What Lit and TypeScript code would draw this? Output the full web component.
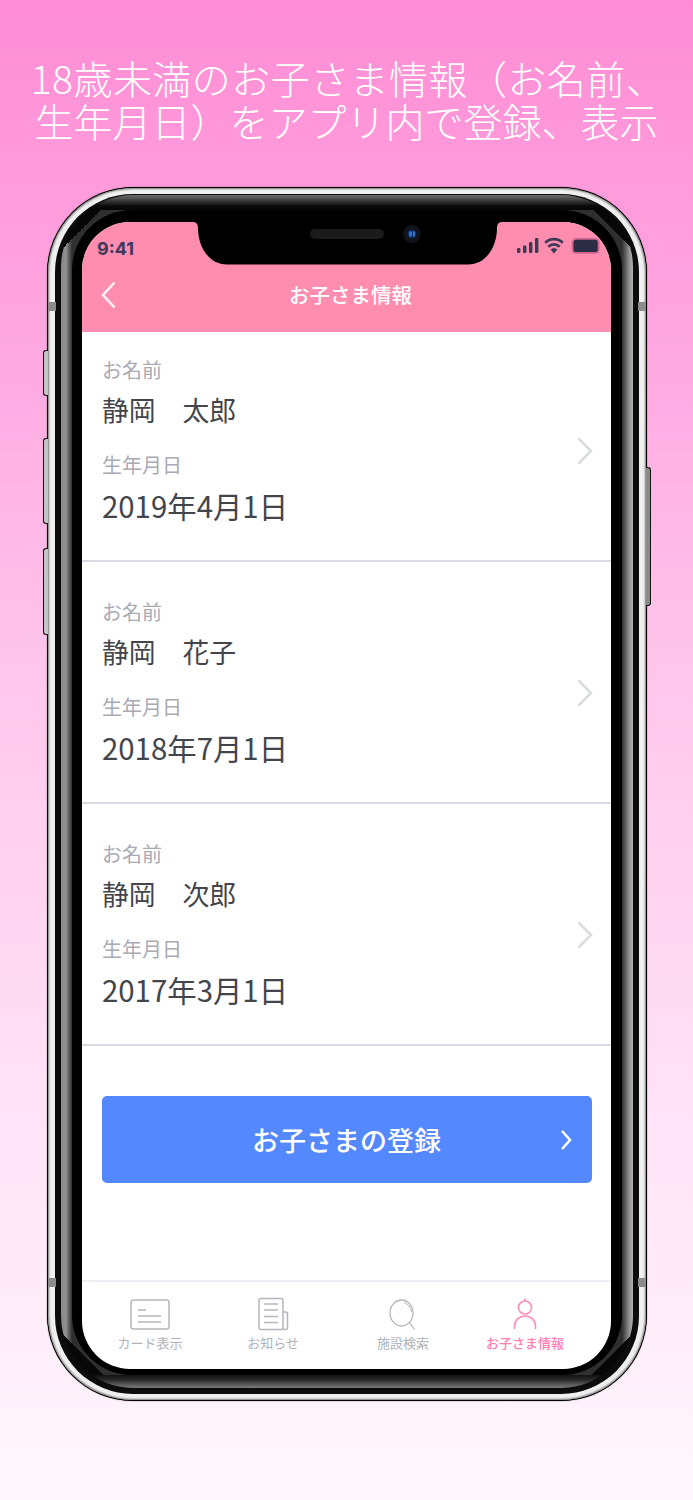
import { LitElement, html, css, svg } from "lit";
import { customElement } from "lit/decorators.js";

const CHILDREN = [
  { name: "静岡　太郎", birth: "2019年4月1日" },
  { name: "静岡　花子", birth: "2018年7月1日" },
  { name: "静岡　次郎", birth: "2017年3月1日" },
];

@customElement("app-root")
export class AppRoot extends LitElement {
  static styles = css`
    :host {
      display: block;
      width: 693px;
      height: 1500px;
      overflow: hidden;
      background: linear-gradient(180deg, #ff8dd5 0%, #ffa6e0 22%, #ffc6eb 45%, #ffe3f6 75%, #fff7fd 100%);
      font-family: "Noto Sans CJK JP", "Noto Sans", sans-serif;
    }
    .headline {
      margin: 0;
      padding-top: 56px;
      font-size: 39px;
      line-height: 43px;
      font-weight: 300;
      color: #fff;
      text-align: center;
      white-space: nowrap;
    }
    .line { display: block; }
    .line-wide { letter-spacing: 0.45px; padding-left: 3px; }
    .phone {
      position: relative;
      box-sizing: border-box;
      width: 600px;
      height: 1214px;
      margin: 45px 0 0 47px;
      padding: 1px;
      border-radius: 86px;
      background: #000;
      box-shadow: 0 0 1px #000;
    }
    .side {
      position: absolute;
      width: 5px;
      box-sizing: border-box;
      border: 1.5px solid #111;
      background: #c4c4c4;
    }
    .left { left: -4px; border-radius: 3px 0 0 3px; border-right: 0; }
    .right { right: -4px; border-radius: 0 3px 3px 0; border-left: 0; background: #8a8a8a; }
    .b1 { top: 163px; height: 46px; }
    .b2 { top: 251px; height: 86px; }
    .b3 { top: 361px; height: 87px; }
    .b4 { top: 280px; height: 139px; }
    .antenna {
      position: absolute;
      width: 8px;
      height: 9px;
      background: #8c8c8c;
      z-index: 1;
    }
    .a-left { left: 1px; }
    .a-right { right: 1px; }
    .a-top { top: 115px; }
    .a-bottom { top: 1091px; }
    .steel {
      box-sizing: border-box;
      height: 100%;
      padding: 6px 7px;
      border-radius: 85px;
      background: #f0f0f0;
      box-shadow: inset 0 0 2px 1px #777;
    }
    .gap {
      box-sizing: border-box;
      height: 100%;
      padding: 1px 6px 6px;
      border-radius: 78px;
      background: #0c0c0c;
    }
    .glass {
      box-sizing: border-box;
      height: 100%;
      padding: 15px 11px 13px;
      border-radius: 72px;
      background:
        linear-gradient(180deg, #6e6e6e, #0a0a0a 11px, #050505 15px) top / 100% 15px no-repeat,
        linear-gradient(0deg, #7c7c7c, #2a2a2a 8px, #111 13px) bottom / 100% 13px no-repeat,
        linear-gradient(135deg, #070707 50%, transparent 50%) left top / 55px 55px no-repeat,
        linear-gradient(225deg, #070707 50%, transparent 50%) right top / 55px 55px no-repeat,
        linear-gradient(45deg, #070707 50%, transparent 50%) left bottom / 55px 55px no-repeat,
        linear-gradient(315deg, #070707 50%, transparent 50%) right bottom / 55px 55px no-repeat,
        linear-gradient(90deg, #8a8a8a 0, #8f8f8f 5px, #2f2f2f 11px, #2f2f2f calc(100% - 11px), #8f8f8f calc(100% - 4px), #b5b5b5 100%);
    }
    .bezel {
      box-sizing: border-box;
      height: 100%;
      padding: 12px 11px 6px 10px;
      border-radius: 60px;
      background: #000;
    }
    .screen {
      position: relative;
      box-sizing: border-box;
      display: flex;
      flex-direction: column;
      height: 100%;
      border-radius: 48px;
      overflow: hidden;
      background: #fff;
    }
    .notch { position: absolute; left: 111px; top: 0; }
    .header {
      box-sizing: border-box;
      height: 110px;
      background: #ff8db0;
    }
    .status {
      box-sizing: border-box;
      display: flex;
      justify-content: space-between;
      align-items: center;
      height: 52px;
      padding: 0 10px 0 15px;
    }
    .clock {
      font-family: "Inter", "Liberation Sans", sans-serif;
      font-size: 18px;
      font-weight: 700;
      color: #3d3a5a;
    }
    .status-icons { margin-top: -5px; display: block; }
    .nav {
      position: relative;
      display: flex;
      align-items: center;
      justify-content: center;
      height: 40px;
    }
    .back { position: absolute; left: 19px; top: 7px; }
    .title {
      font-size: 20.5px;
      font-weight: 500;
      color: #fff;
      margin-left: 8px;
    }
    .row {
      display: flex;
      justify-content: space-between;
      align-items: center;
      padding: 36px 18px 35px 20px;
      border-bottom: 2px solid #d9dbe4;
    }
    .row:first-child { padding-top: 24px; }
    .fields { display: flex; flex-direction: column; }
    .label {
      font-size: 20px;
      line-height: 28px;
      color: #a9abb4;
    }
    .value {
      font-size: 26.8px;
      line-height: 40px;
      margin: 6px 0 21px;
      color: #43454b;
      white-space: nowrap;
    }
    .date {
      font-size: 29.4px;
      line-height: 40px;
      margin: 6px 0 0;
      color: #43454b;
      white-space: nowrap;
    }
    .chev { display: block; margin-top: 20px; }
    .cta {
      display: flex;
      align-items: center;
      justify-content: center;
      position: relative;
      height: 87px;
      margin: 50px 19px 0 20px;
      border-radius: 5px;
      background: #5388ff;
      color: #fff;
      font-size: 27px;
      font-weight: 500;
    }
    .cta-label { margin-right: 1px; }
    .cta-chev { position: absolute; right: 20px; top: 33px; }
    .tabs {
      box-sizing: border-box;
      display: grid;
      grid-template-columns: 124px 122px 138px 106px;
      height: 89px;
      margin-top: auto;
      padding: 15px 0 0 6px;
      border-top: 2px solid #eeeef5;
    }
    .tab {
      display: flex;
      flex-direction: column;
      align-items: center;
      gap: 4px;
      font-size: 13px;
      line-height: 16px;
      color: #b1b3ba;
      white-space: nowrap;
    }
    .tab svg { display: block; }
    .tab.active { color: #ff7fb2; font-weight: 500; }
  `;

  private statusIcons() {
    return html`<svg class="status-icons" width="84" height="18" viewBox="0 0 84 18">
      <g fill="#3d3a55">
        <rect x="0" y="11" width="3.4" height="5" rx="1"></rect>
        <rect x="6" y="8.5" width="3.4" height="7.5" rx="1"></rect>
        <rect x="12" y="5" width="3.4" height="11" rx="1"></rect>
        <rect x="18" y="1" width="3.4" height="15" rx="1"></rect>
        <path d="M37 16.500l-3.400-3.900a5 5 0 0 1 6.800 0z"></path>
      </g>
      <g fill="none" stroke="#3d3a55" stroke-width="2.700">
        <path d="M31.300 9.800a8 8 0 0 1 11.400 0"></path>
        <path d="M28.200 5.800a12.500 12.500 0 0 1 17.600 0"></path>
      </g>
      <rect x="55.6" y="1.900" width="26" height="14" rx="3.5" fill="#2c2c44" stroke="#cf6690" stroke-width="1.8"></rect>
    </svg>`;
  }

  private cardIcon() {
    return svg`<rect x="1" y="3" width="38" height="29" rx="2.5"/>
      <path d="M8 13h8M8 19h23M8 25h23"/>`;
  }

  private tabs() {
    const stroke = "#b4b6bd";
    return [
      {
        label: "カード表示",
        icon: html`<svg width="40" height="34" viewBox="0 0 40 34" fill="none" stroke=${stroke} stroke-width="1.5">${this.cardIcon()}</svg>`,
      },
      {
        label: "お知らせ",
        icon: html`<svg width="32" height="34" viewBox="0 0 32 34" fill="none" stroke=${stroke} stroke-width="1.5">
          <rect x="2" y="1.5" width="24" height="31" rx="2"></rect>
          <path d="M7 7h14M7 13h14M7 19.5h14M7 25.500h14"></path>
          <path d="M26 15h2.500a2 2 0 0 1 2 2v13.500a2 2 0 0 1-2 2H26"></path>
        </svg>`,
      },
      {
        label: "施設検索",
        icon: html`<svg width="32" height="34" viewBox="0 0 32 34" fill="none" stroke=${stroke} stroke-width="1.3">
          <ellipse cx="14.500" cy="16" rx="11.500" ry="13"></ellipse>
          <path d="M17 5.500a11 12 0 0 1 7.500 9.500" stroke-width="1"></path>
          <path d="M23 26l4.500 6.500"></path>
        </svg>`,
      },
      {
        label: "お子さま情報",
        active: true,
        icon: html`<svg width="26" height="34" viewBox="0 0 26 34" fill="none" stroke="#ff8db8" stroke-width="1.6">
          <circle cx="13" cy="10.500" r="6.500"></circle>
          <path d="M13 4V1.500"></path>
          <path d="M2.500 32v-3a10.500 10 0 0 1 21 0v3"></path>
        </svg>`,
      },
    ];
  }

  render() {
    return html`
      <h1 class="headline"><span class="line line-wide">18歳未満のお子さま情報（お名前、</span><span class="line">生年月日）をアプリ内で登録、表示</span></h1>
      <div class="phone">
        <div class="side left b1"></div>
        <div class="side left b2"></div>
        <div class="side left b3"></div>
        <div class="side right b4"></div>
        <div class="antenna a-left a-top"></div>
        <div class="antenna a-right a-top"></div>
        <div class="antenna a-left a-bottom"></div>
        <div class="antenna a-right a-bottom"></div>
        <div class="steel"><div class="gap"><div class="glass"><div class="bezel">
          <div class="screen">
            <header class="header">
              <div class="status">
                <span class="clock">9:41</span>
                ${this.statusIcons()}
              </div>
              <div class="nav">
                <svg class="back" width="16" height="28" viewBox="0 0 16 28" fill="none" stroke="#fff" stroke-width="2.500" opacity="0.9">
                  <path d="M13.500 1.500L2 14l11.500 12.500"></path>
                </svg>
                <span class="title">お子さま情報</span>
              </div>
            </header>
            <section>
              ${CHILDREN.map(
                (c) => html`<div class="row">
                  <div class="fields">
                    <div class="label">お名前</div>
                    <div class="value">${c.name}</div>
                    <div class="label">生年月日</div>
                    <div class="date">${c.birth}</div>
                  </div>
                  <svg class="chev" width="16" height="28" viewBox="0 0 16 28" fill="none" stroke="#d9dce1" stroke-width="2.600">
                    <path d="M1.500 1.500L14 14 1.500 26.500"></path>
                  </svg>
                </div>`
              )}
            </section>
            <div class="cta">
              <span class="cta-label">お子さまの登録</span>
              <svg class="cta-chev" width="12" height="22" viewBox="0 0 12 22" fill="none" stroke="#fff" stroke-width="2.600">
                <path d="M2 2l8 9-8 9"></path>
              </svg>
            </div>
            <nav class="tabs">
              ${this.tabs().map(
                (t) => html`<div class="tab ${t.active ? "active" : ""}">${t.icon}<span>${t.label}</span></div>`
              )}
            </nav>
            <svg class="notch" width="309" height="43" viewBox="0 0 309 43">
              <path d="M0 0C3 0 5 2 5 6C5 25 16 42.500 34 42.500H275C293 42.500 304 25 304 6C304 2 306 0 309 0Z" fill="#000"></path>
              <rect x="117" y="7" width="74" height="10" rx="5" fill="#1b1b1b"></rect>
              <circle cx="219" cy="12" r="9" fill="#12131a"></circle>
              <circle cx="219" cy="12" r="4.500" fill="#0d2a5c"></circle>
              <ellipse cx="217.500" cy="12" rx="1.500" ry="3" fill="#2f6fd0"></ellipse>
              <ellipse cx="221" cy="12" rx="1.300" ry="3" fill="#2f6fd0"></ellipse>
            </svg>
          </div>
        </div></div></div></div>
      </div>
    `;
  }
}
